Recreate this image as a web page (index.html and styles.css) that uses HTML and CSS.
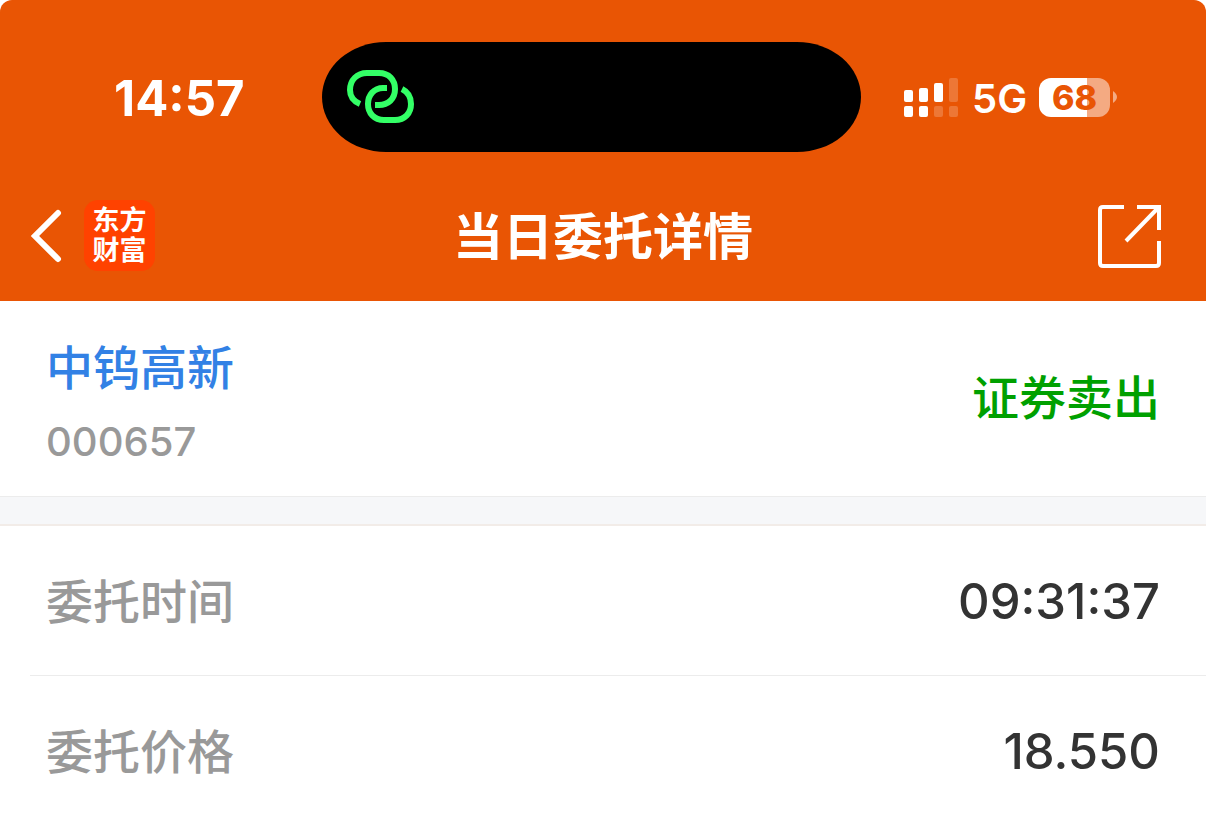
FILE: index.html
```html
<!DOCTYPE html>
<html lang="zh-CN">
<head>
   <meta charset="UTF-8"><title>当日委托详情</title>
   <meta name="viewport" content="width=device-width, initial-scale=1">
   <link rel="stylesheet" href="styles.css">
</head> <body>

<header class="top">
   <div class="status">
      <time class="clock">14:57</time>
      <div class="island">
         <svg class="link-icon" viewBox="0 0 68 54" fill="none" stroke="#3f6" stroke-width="6">
            <path d="M13 34C6 31 3 26 3 20C3 10 10 3 20 3H32C42 3 48 10 48 19C48 29 41 35 32 35H28"/>
            <path d="M40 18H36C27 18 21 25 21 34C21 43 27 50 37 50H48C58 50 64 43 64 34C64 27 61 22 55 19"/>
         </svg>
      </div>
      <div class="signals">
         <svg class="bars" viewBox="0 0 54 39" fill="#fff">
            <rect x="0" y="12" width="9" height="12" rx="2"/>
            <rect x="15" y="10" width="9" height="14" rx="2"/>
            <rect x="30" y="5" width="9" height="19" rx="2"/>
            <rect x="45" y="0" width="9" height="24" rx="2" opacity=".2"/>
            <rect x="0" y="28" width="9" height="11" rx="2"/>
            <rect x="15" y="28" width="9" height="11" rx="2"/>
            <rect x="30" y="28" width="9" height="11" rx="2" opacity=".2"/>
            <rect x="45" y="28" width="9" height="11" rx="2" opacity=".2"/>
         </svg>
         <span class="network">5G</span>
         <span class="battery">68</span>
         <svg class="battery-tip" viewBox="0 0 4 12"><path d="M0 0Q4 3 4 6T0 12Z" fill="#fff" opacity=".5"/></svg>
      </div>
   </div>

   <nav class="nav">
      <div class="nav-left">
         <button class="icon-button" aria-label="返回">
            <svg class="back-icon" viewBox="0 0 30 52" fill="none" stroke="#fff" stroke-width="6" stroke-linecap="round">
               <path d="M26 3L3 26L26 49" stroke-linejoin="miter"/>
            </svg>
         </button>
         <a class="logo" href="#">东方<br>财富</a>
      </div>
      <h1 class="title">当日委托详情</h1>
      <button class="icon-button share" aria-label="分享">
         <svg class="share-icon" viewBox="0 0 64 64" fill="none" stroke="#fff" stroke-width="4">
            <path d="M26 2H5Q2 2 2 5V58Q2 61 5 61H58Q61 61 61 58V36"/>
            <path d="M39 2H61V25M60 3L28 36"/>
         </svg>
      </button>
   </nav>
</header>

<main>
   <section class="stock">
      <div>
         <a class="stock-name" href="#">中钨高新</a>
         <div class="stock-code">000657</div>
      </div>
      <strong class="side">证券卖出</strong>
   </section>

   <div class="divider"></div>

   <dl class="details">
      <div class="row"><dt>委托时间</dt><dd>09:31:37</dd></div>
      <div class="row"><dt>委托价格</dt><dd>18.550</dd></div>
   </dl>
</main>

</body> </html>
```
FILE: styles.css
```css
* {
   box-sizing: border-box;
}

body {
   margin: 0;
   background: #fff;
   color: #333;
   font-family: Inter, "Noto Sans CJK SC", sans-serif;
   font-size: 49px;
}

.top {
   background: #e95504;
   color: #fff;
   border-radius: 12px 12px 0 0;
   padding-top: 42px;
}

.status {
   display: flex;
   align-items: center;
   padding: 0 89px 0 114px;
}

.clock {
   width: 208px;
   padding-top: 2px;
   font-size: 49px;
   font-weight: 700;
}

.island {
   flex: 1;
   display: flex;
   align-items: center;
   height: 110px;
   padding-left: 25px;
   border-radius: 64px / 55px;
   background: #000;
}

.link-icon {
   width: 68px;
   height: 54px;
}

.signals {
   display: flex;
   align-items: center;
   width: 213px;
   margin-left: 43px;
}

.bars {
   width: 54px;
   height: 39px;
}

.network {
   width: 53px;
   margin: 0 14px;
   padding-top: 4px;
   font-size: 40px;
   font-weight: 600;
   line-height: 40px;
}

.battery {
   width: 71px;
   height: 39px;
   border-radius: 12px;
   background: linear-gradient(90deg, #fff 48px, #f4aa82 48px);
   color: #e95504;
   font-size: 34px;
   font-weight: 800;
   line-height: 40px;
   text-align: center;
}

.battery-tip {
   width: 4px;
   height: 12px;
   margin-left: 3px;
}

.nav {
   display: grid;
   grid-template-columns: 1fr auto 1fr;
   align-items: center;
   height: 149px;
   padding: 18px 32px 0;
}

.nav-left {
   display: flex;
   align-items: center;
   gap: 22px;
}

.icon-button {
   display: block;
   padding: 0;
   border: none;
   background: none;
   cursor: pointer;
}

.icon-button svg {
   display: block;
}

.back-icon {
   width: 30px;
   height: 52px;
   overflow: visible;
}

.logo {
   width: 71px;
   height: 71px;
   padding-top: 4px;
   border-radius: 14px;
   background: #ff4200;
   color: #fff;
   font-family: "Noto Sans CJK SC", sans-serif;
   font-size: 27px;
   font-weight: 700;
   line-height: 30px;
   text-align: center;
   text-decoration: none;
}

.title {
   margin: 0;
   padding-top: 2px;
   font-size: 50px;
   font-weight: 700;
   line-height: 64px;
}

.share {
   justify-self: end;
   margin-right: 12px;
   padding-top: 2px;
}

.share-icon {
   width: 64px;
   height: 64px;
}

.stock {
   display: flex;
   justify-content: space-between;
   align-items: center;
   height: 195px;
   padding: 0 46px;
}

.stock-name {
   display: block;
   padding-top: 8px;
   color: #3281e5;
   font-size: 47px;
   font-weight: 500;
   line-height: 72px;
   text-decoration: none;
}

.stock-code {
   padding-top: 6px;
   color: #999;
   font-size: 40px;
   font-weight: 500;
   line-height: 64px;
}

.side {
   padding-bottom: 8px;
   color: #00a000;
   font-size: 47px;
   font-weight: 500;
}

.divider {
   height: 30px;
   border-top: 1px solid #ececec;
   border-bottom: 2px solid #f2ece8;
   background: #f6f7f9;
}

.details {
   margin: 0;
}

.row {
   display: flex;
   justify-content: space-between;
   align-items: center;
   height: 150px;
   margin-left: 30px;
   padding: 2px 46px 0 16px;
   border-bottom: 1px solid #ececec;
}

.row dt {
   color: #999;
   font-size: 47px;
   font-weight: 500;
   line-height: 72px;
}

.row dd {
   margin: 0;
   font-weight: 500;
}
```
